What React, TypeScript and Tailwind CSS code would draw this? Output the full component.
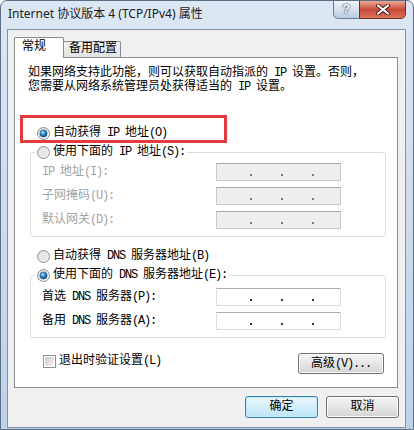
import React from 'react';

// SimSun-like: serif monospace latin + CJK fallback
const dlgFont = { fontFamily: '"Liberation Mono", "Noto Sans CJK SC", monospace' };

// half-width latin runs squeezed to ~6px per char like SimSun
const T = ({ s }: { s: string }) => (
  <>
    {s.split(/([\x20-\x7e]+)/).map((part, i) =>
      /^[\x20-\x7e]+$/.test(part) ? (
        <span key={i} className="tracking-[-1.2px]">
          {part}
        </span>
      ) : (
        <React.Fragment key={i}>{part}</React.Fragment>
      )
    )}
  </>
);

const Radio = ({ checked, id }: { checked?: boolean; id: string }) => (
  <svg width="13" height="13" viewBox="0 0 13 13" className="shrink-0">
    <defs>
      <linearGradient id={`ring-${id}`} x1="0" y1="0" x2="1" y2="1">
        <stop offset="0" stopColor="#d9d9d9" />
        <stop offset="1" stopColor="#fbfbfb" />
      </linearGradient>
      <radialGradient id={`dot-${id}`} cx="0.4" cy="0.35" r="0.6">
        <stop offset="0" stopColor="#c4ecff" />
        <stop offset="0.45" stopColor="#3e95d4" />
        <stop offset="1" stopColor="#0d4f8c" />
      </radialGradient>
    </defs>
    <circle cx="6.5" cy="6.5" r="6" fill={`url(#ring-${id})`} stroke="#8d8f91" />
    {checked ? (
      <circle cx="6.5" cy="6.5" r="3.6" fill={`url(#dot-${id})`} stroke="#1b4c78" strokeWidth="0.6" />
    ) : (
      <circle cx="6.5" cy="6.5" r="3.8" fill="#e6e6e6" />
    )}
  </svg>
);

const IpBox = ({ disabled }: { disabled?: boolean }) => (
  <div
    className={`flex items-end w-[125px] h-[18px] pb-[4px] pl-[33px] gap-[29px] border ${
      disabled
        ? 'bg-[#eeeeee] border-[#c8c8c8] border-t-[#a6a6a6]'
        : 'bg-white border-[#dadde2] border-t-[#abadb3]'
    }`}
  >
    {[0, 1, 2].map((i) => (
      <span key={i} className={`w-[2px] h-[2px] ${disabled ? 'bg-[#7a7a7a]' : 'bg-[#333333]'}`} />
    ))}
  </div>
);

const FieldRow = ({ label, disabled }: { label: string; disabled?: boolean }) => (
  <div className="flex items-center h-[18px] pl-[11px]">
    <span className={`w-[174px] text-[12px] leading-[16px] ${disabled ? 'text-[#a3a3a3]' : 'text-black'}`}>
      <T s={label} />
    </span>
    <IpBox disabled={disabled} />
  </div>
);

const RadioRow = ({ label, checked, id }: { label: string; checked?: boolean; id: string }) => (
  <div className="flex items-center gap-[3px] h-[16px] text-[12px] leading-[16px] text-black">
    <Radio checked={checked} id={id} />
    <span>
      <T s={label} />
    </span>
  </div>
);

const WinButton = ({ text, primary, w }: { text: string; primary?: boolean; w: string }) => (
  <button
    className={`${w} flex items-center justify-center rounded-[3px] border text-[12px] leading-[16px] text-black ${
      primary
        ? 'border-[#3c7fb1] bg-gradient-to-b from-[#eaf6fd] via-[#d4eefb] to-[#bde4f8] shadow-[inset_0_0_0_1px_#c4e8fb]'
        : 'border-[#707070] bg-gradient-to-b from-[#f4f4f4] via-[#e6e6e6] to-[#d4d4d4] shadow-[inset_0_0_0_1px_#fcfcfc]'
    }`}
  >
    <span>
      <T s={text} />
    </span>
  </button>
);

export default function App() {
  return (
    <div
      className="w-[414px] h-[430px] overflow-hidden rounded-t-[7px] border border-[#5d6e84] bg-gradient-to-b from-[#dce7f3] via-[#cddcee] to-[#bcd2ea]"
      style={dlgFont}
    >
      {/* Title bar */}
      <div className="flex h-[28px]">
        <div
          className="pl-[7px] pt-[5px] text-[12px] leading-[16px] text-[#1b1b1b]"
          style={{ fontFamily: '"Noto Sans", "Noto Sans CJK SC", sans-serif' }}
        >
          Internet 协议版本 4 (TCP/IPv4) 属性
        </div>
        <div className="ml-auto mr-[7px] flex h-[19px] -mt-px">
          <div className="w-[27px] h-[19px] flex items-center justify-center rounded-bl-[5px] border border-[#6a7c93] bg-gradient-to-b from-[#eef3f9] via-[#d6e1ed] to-[#b9cbe0] text-[13px] font-bold leading-none text-white [text-shadow:0_0_2px_#2e3d50,0_0_1px_#2e3d50]">
            ?
          </div>
          <div className="w-[47px] h-[19px] -ml-px flex items-center justify-center rounded-br-[5px] border border-[#6d2f28] bg-gradient-to-b from-[#e9a898] via-[#c8493a] to-[#d9725c]">
            <svg width="14" height="11" viewBox="0 0 14 11">
              <path d="M2 1.5 L12 9.5 M12 1.5 L2 9.5" stroke="#4a1a14" strokeWidth="4" strokeLinecap="round" />
              <path d="M2 1.5 L12 9.5 M12 1.5 L2 9.5" stroke="#ffffff" strokeWidth="2.2" strokeLinecap="round" />
            </svg>
          </div>
        </div>
      </div>

      {/* Client area */}
      <div className="ml-[6px] w-[399px] h-[399px] border border-[#8393a8] bg-[#f0f0f0]">
        {/* Tabs */}
        <div className="relative z-10 mt-[7px] ml-[6px] flex items-end h-[21px] text-[12px] leading-[16px] text-black">
          <div className="w-[50px] h-[21px] pl-[7px] pt-px border-l border-t border-r border-[#898c95] rounded-t-[2px] bg-white">
            常规
          </div>
          <div className="w-[57px] h-[16px] mb-px pl-[5px] border-t border-r border-[#898c95] rounded-tr-[2px] bg-gradient-to-b from-[#f4f4f4] to-[#e2e2e2] leading-[15px]">
            备用配置
          </div>
        </div>

        {/* Tab panel */}
        <div className="relative -mt-px ml-[6px] w-[384px] h-[331px] border border-[#898c95] bg-white text-[12px] text-black">
          <div className="pl-[13px] pt-[8px] leading-[14px]">
            <div>
              <T s="如果网络支持此功能，则可以获取自动指派的 IP 设置。否则，" />
            </div>
            <div>
              <T s="您需要从网络系统管理员处获得适当的 IP 设置。" />
            </div>
          </div>

          {/* annotation box */}
          <div className="absolute left-[5px] top-[57px] w-[207px] h-[28px] border-[3px] border-[#e33b3d]" />

          <div className="mt-[31px] pl-[22px]">
            <RadioRow label="自动获得 IP 地址(O)" checked id="a" />
          </div>

          <fieldset className="mt-[3px] ml-[15px] w-[356px] border border-[#d5dfe5] rounded-[3px] pb-[7px]">
            <legend className="ml-[4px] px-[2px]">
              <RadioRow label="使用下面的 IP 地址(S):" id="b" />
            </legend>
            <div className="mt-[3px] flex flex-col gap-[6px]">
              <FieldRow label="IP 地址(I):" disabled />
              <FieldRow label="子网掩码(U):" disabled />
              <FieldRow label="默认网关(D):" disabled />
            </div>
          </fieldset>

          <div className="mt-[11px] pl-[22px]">
            <RadioRow label="自动获得 DNS 服务器地址(B)" id="c" />
          </div>

          <fieldset className="mt-[3px] ml-[15px] w-[356px] border border-[#d5dfe5] rounded-[3px] pb-[7px]">
            <legend className="ml-[4px] px-[2px]">
              <RadioRow label="使用下面的 DNS 服务器地址(E):" checked id="d" />
            </legend>
            <div className="mt-[5px] flex flex-col gap-[6px]">
              <FieldRow label="首选 DNS 服务器(P):" />
              <FieldRow label="备用 DNS 服务器(A):" />
            </div>
          </fieldset>

          <div className="mt-[15px] flex items-start">
            <div className="ml-[28px] flex items-center gap-[3px] h-[16px] leading-[16px]">
              <div className="w-[13px] h-[13px] border border-[#8f8f8f] bg-white p-[1px]">
                <div className="w-full h-full bg-gradient-to-br from-[#c9c9c9] to-[#f5f5f5]" />
              </div>
              <span>
                <T s="退出时验证设置(L)" />
              </span>
            </div>
            <div className="ml-auto mr-[13px] h-[21px] flex">
              <WinButton text="高级(V)..." w="w-[86px]" />
            </div>
          </div>
        </div>

        {/* Dialog buttons */}
        <div className="mt-[8px] flex justify-end gap-[8px] pr-[6px] h-[22px]">
          <WinButton text="确定" primary w="w-[73px]" />
          <WinButton text="取消" w="w-[73px]" />
        </div>
      </div>
    </div>
  );
}
